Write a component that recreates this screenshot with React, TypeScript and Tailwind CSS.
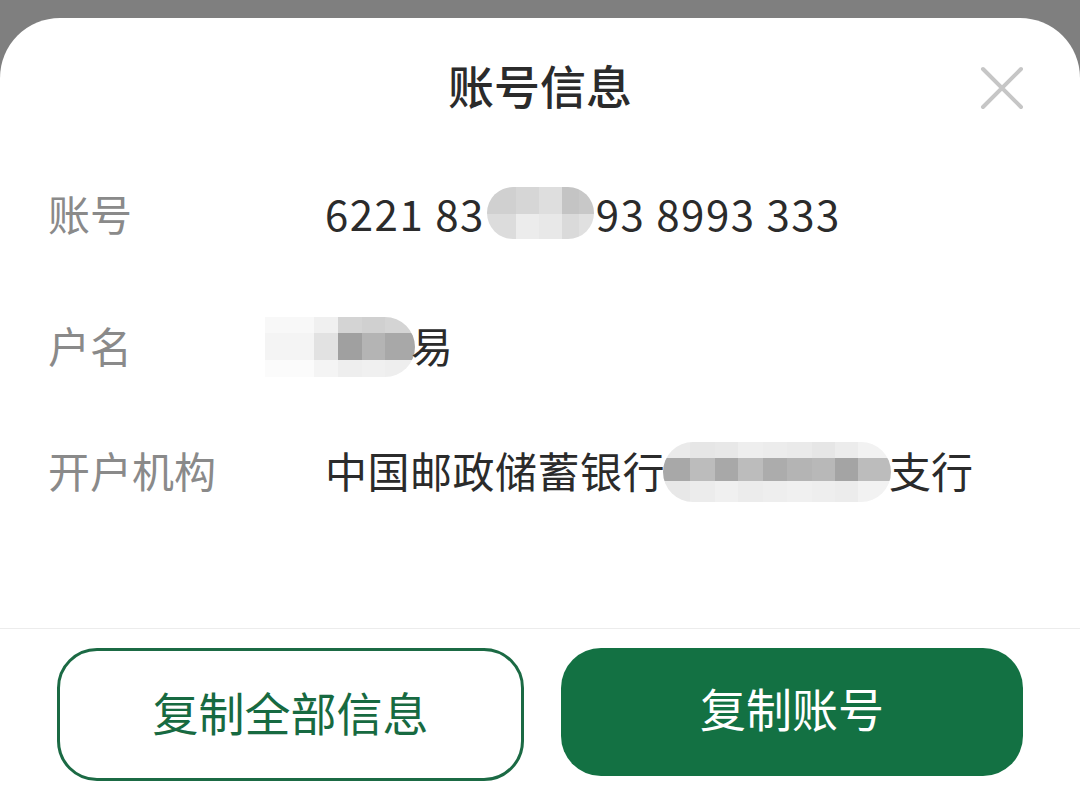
import React from "react";

const font = { fontFamily: '"Noto Sans CJK SC", "Noto Sans", sans-serif' };

function Pix({ cols, rows, colors, className }: { cols: number[]; rows: number[]; colors: string[][]; className: string }) {
  return (
    <span className={"inline-flex flex-col overflow-hidden shrink-0 " + className}>
      {rows.map((h, r) => (
        <span key={r} className="flex" style={{ height: h }}>
          {cols.map((w, c) => (
            <span key={c} style={{ width: w, background: colors[r][c] }} />
          ))}
        </span>
      ))}
    </span>
  );
}

export default function App() {
  return (
    <div className="w-[1080px] h-[807px] bg-[#7f7f7f] pt-[18px] overflow-hidden" style={font}>
      <div className="h-[789px] bg-white rounded-t-[60px] flex flex-col">
        <div className="relative h-[140px] flex items-center justify-center">
          <span className="text-[46px] font-medium text-[#2b2b2b] leading-none -mt-[8px]">账号信息</span>
          <svg className="absolute left-[980px] top-[48px]" width="44" height="44" viewBox="0 0 44 44">
            <path d="M3 3 L41 41 M41 3 L3 41" stroke="#c6c6c6" strokeWidth="4" strokeLinecap="round" fill="none" />
          </svg>
        </div>

        <div className="flex items-center h-[56px] mt-[27px] text-[42px] leading-none">
          <span className="w-[325px] pl-[48px] text-[#8a8a8a]">账号</span>
          <span className="inline-flex items-center text-[#2b2b2b] tracking-[1.5px]">
            <span>6221 83</span>
            <Pix
              className="rounded-full h-[52px] w-[107px] ml-[2px]"
              cols={[7, 22, 23, 23, 17, 15]}
              rows={[27, 25]}
              colors={[
                ["#d0d0d0", "#d0d0d0", "#d6d6d6", "#dedede", "#c4c4c4", "#c8c8c8"],
                ["#dcdcdc", "#dcdcdc", "#ececec", "#e8e8e8", "#dadada", "#e0e0e0"],
              ]}
            />
            <span className="ml-[2px]">93 8993 333</span>
          </span>
        </div>

        <div className="flex items-center h-[56px] mt-[76px] text-[42px] leading-none">
          <span className="w-[265px] pl-[48px] text-[#8a8a8a]">户名</span>
          <span className="inline-flex items-center text-[#2b2b2b]">
            <Pix
              className="rounded-r-full rounded-l-[30px] h-[60px] w-[150px] mt-[4px]"
              cols={[49, 24, 24, 23, 30]}
              rows={[16, 27, 17]}
              colors={[
                ["#f8f8f8", "#f0f0f0", "#d4d4d4", "#d0d0d0", "#d4d4d4"],
                ["#f4f4f4", "#e2e2e2", "#a0a0a0", "#b4b4b4", "#a8a8a8"],
                ["#fbfbfb", "#f4f4f4", "#eeeeee", "#f0f0f0", "#eeeeee"],
              ]}
            />
            <span className="-ml-[4px]">易</span>
          </span>
        </div>

        <div className="flex items-center h-[56px] mt-[69px] text-[42px] leading-none">
          <span className="w-[325px] pl-[48px] text-[#8a8a8a]">开户机构</span>
          <span className="inline-flex items-center text-[#2b2b2b]">
            <span className="tracking-[0.5px]">中国邮政储蓄银行</span>
            <Pix
              className="rounded-full h-[60px] w-[228px] -ml-[2px] mt-[3px]"
              cols={[27, 25, 23, 25, 24, 25, 23, 23, 33]}
              rows={[16, 23, 21]}
              colors={[
                ["#eaeaea", "#e6e6e6", "#e8e8e8", "#eeeeee", "#ececec", "#eaeaea", "#e6e6e6", "#ececec", "#f2f2f2"],
                ["#a8a8a8", "#bcbcbc", "#a8a8a8", "#bcbcbc", "#acacac", "#b4b4b4", "#b8b8b8", "#a4a4a4", "#bcbcbc"],
                ["#e8e8e8", "#ececec", "#f0f0f0", "#ececec", "#eeeeee", "#f0f0f0", "#eeeeee", "#ececec", "#f2f2f2"],
              ]}
            />
            <span className="-ml-[2px]">支行</span>
          </span>
        </div>

        <div className="mt-[130px] h-px bg-[#ececec]" />

        <div className="flex items-start gap-[37px] pl-[57px] pt-[19px]">
          <button className="w-[467px] h-[133px] rounded-[40px] border-[3px] border-[#1b6a44] bg-white text-[46px] text-[#176a41] flex items-center justify-center leading-none pb-[8px]">
            复制全部信息
          </button>
          <button className="w-[462px] h-[128px] rounded-[40px] bg-[#137143] text-[46px] text-white flex items-center justify-center leading-none pb-[10px]">
            复制账号
          </button>
        </div>
      </div>
    </div>
  );
}
